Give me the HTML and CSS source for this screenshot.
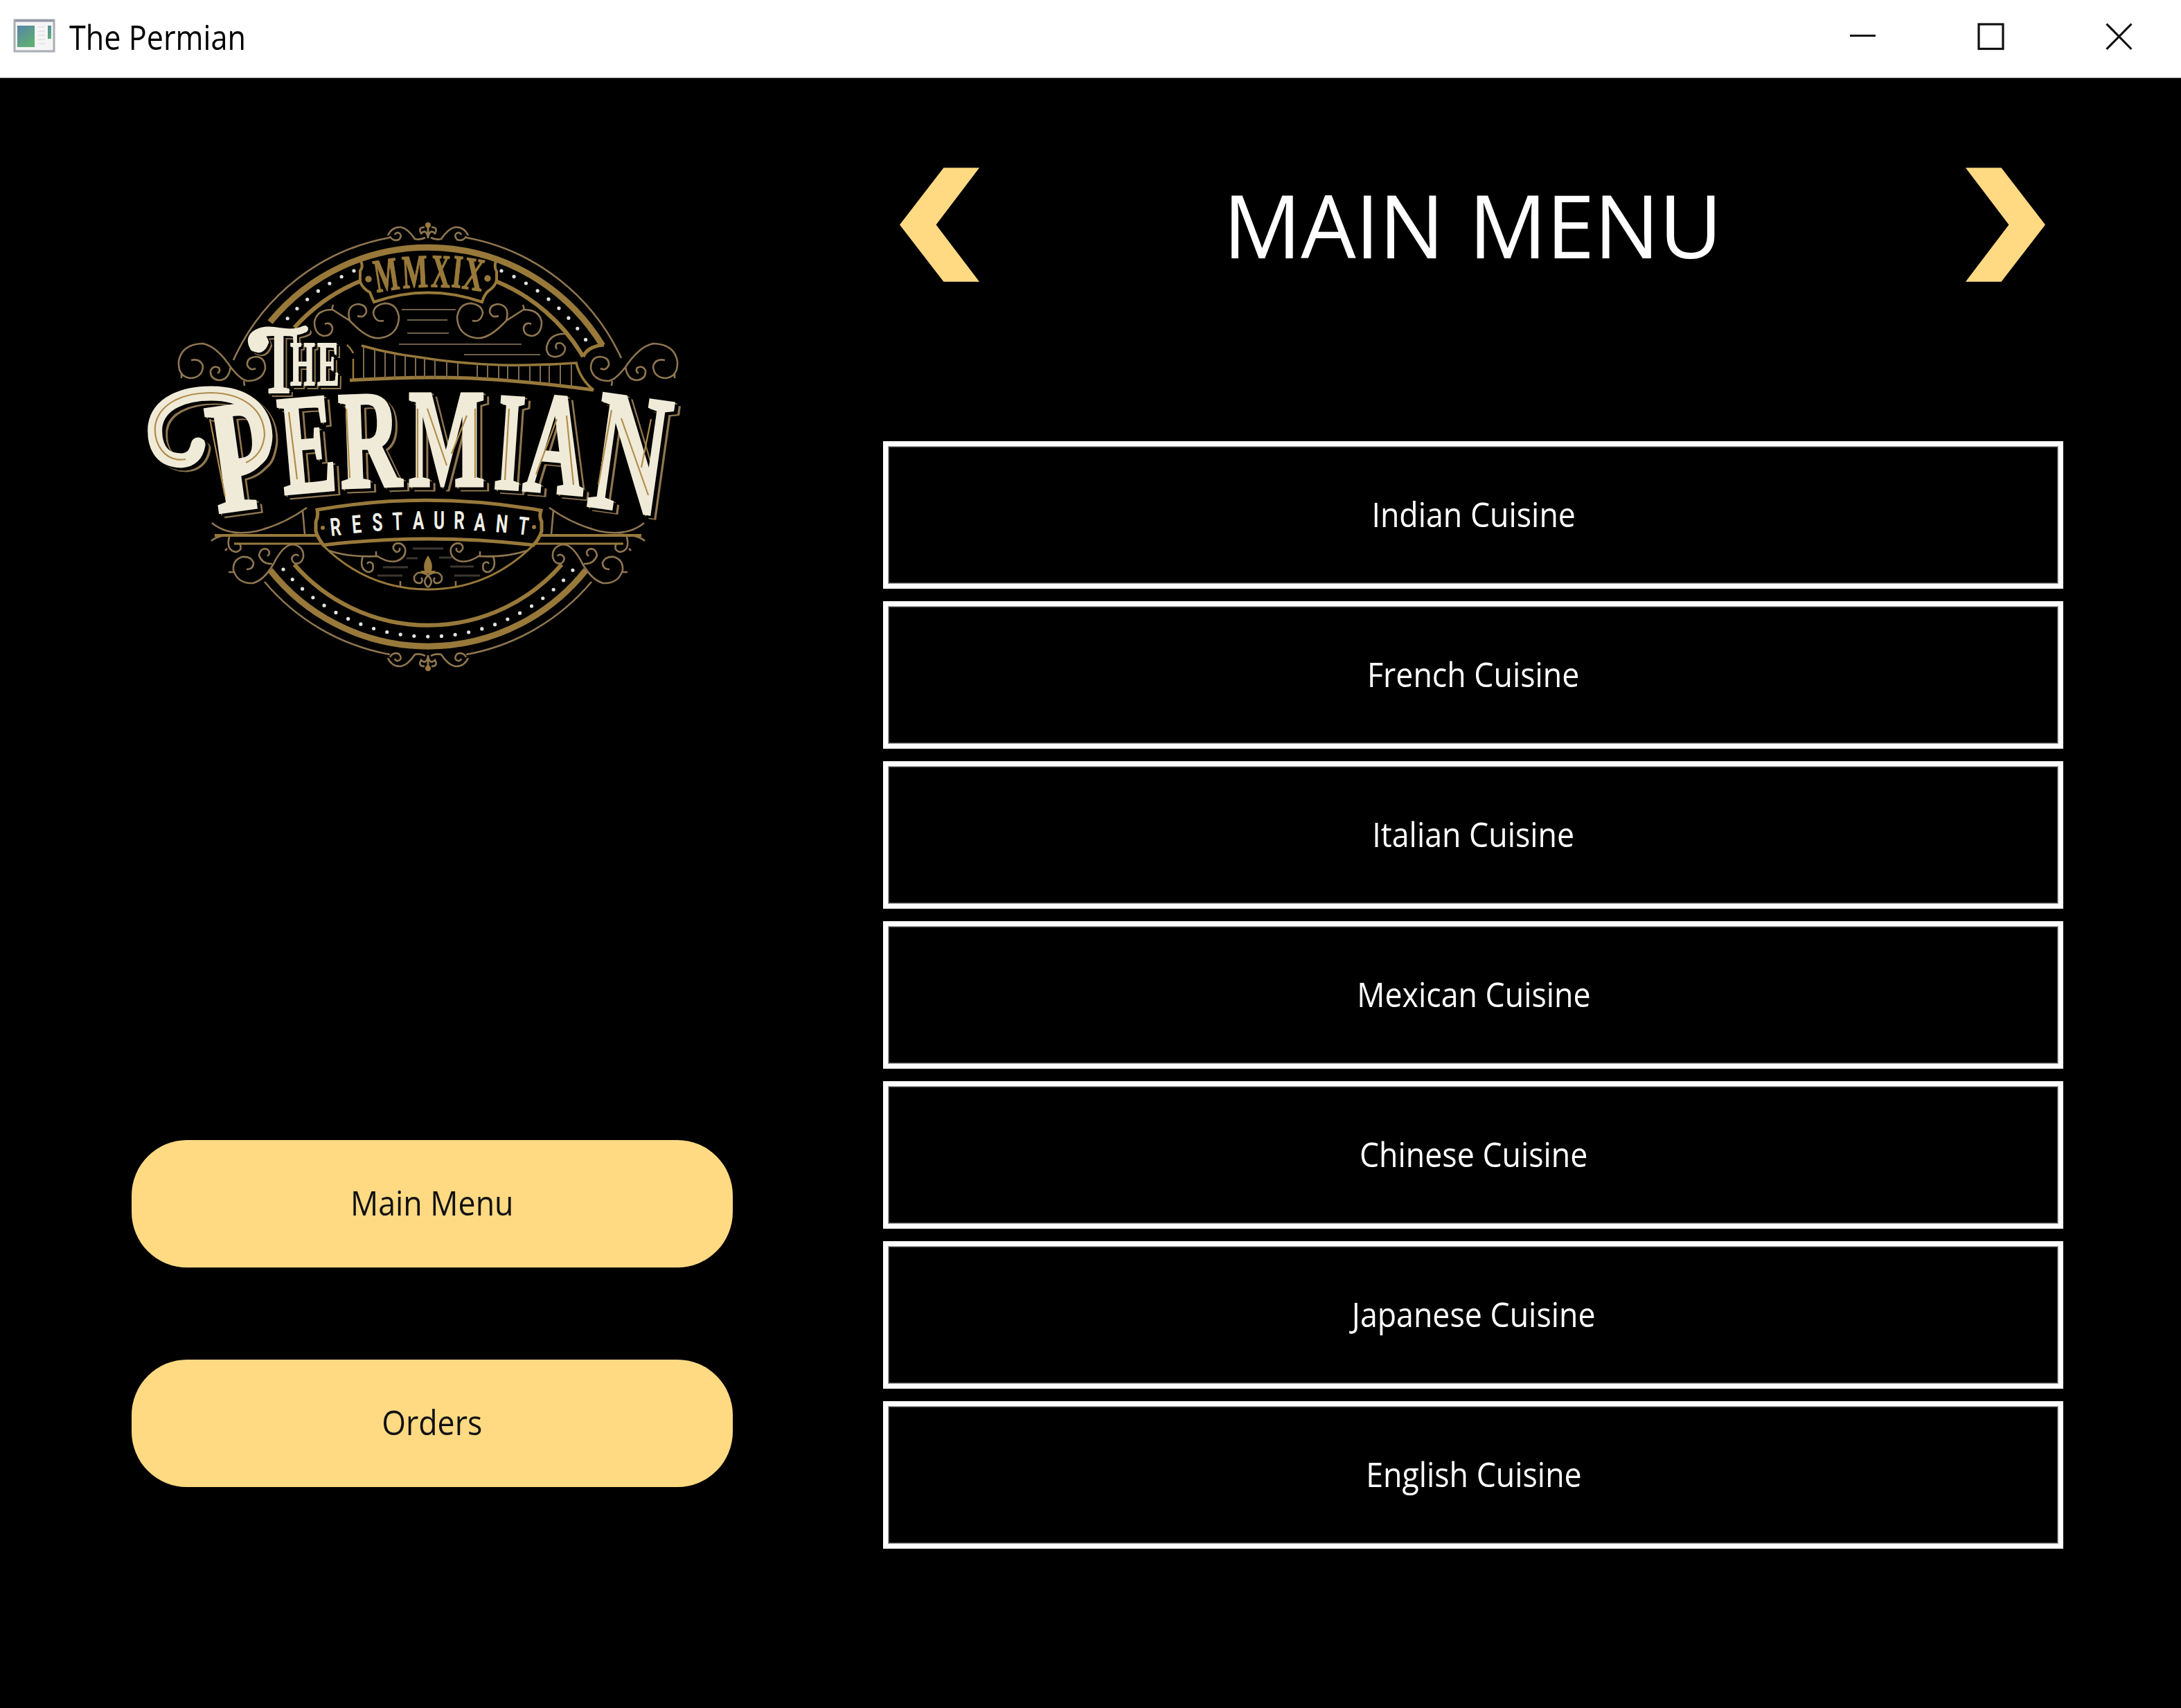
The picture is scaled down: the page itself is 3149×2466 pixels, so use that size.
FILE: index.html
```html
<!DOCTYPE html>
<html lang="en">
<head>
<meta charset="utf-8">
<title>The Permian</title>
<link rel="stylesheet" href="styles.css">
</head>
<body>
<div class="window">
  <header class="titlebar">
    <svg class="app-icon" viewBox="0 0 62 52">
      <defs>
        <linearGradient id="pane" x1="0" y1="0" x2=".6" y2="1"><stop offset="0" stop-color="#5685a8"/><stop offset="1" stop-color="#5fae74"/></linearGradient>
      </defs>
      <rect x="2" y="2" width="57" height="45" fill="#f5f5f6" stroke="#a9adb4" stroke-width="3"/>
      <path d="M3 3H58" stroke="#9096a3" stroke-width="3"/>
      <rect x="6" y="10" width="25" height="31" fill="url(#pane)"/>
      <path d="M36 12H46M36 18H46M36 24H46M36 30H46M36 36H46" stroke="#e6e6e8" stroke-width="2"/>
      <rect x="50" y="10" width="5" height="19" fill="url(#pane)"/>
    </svg>
    <span class="title">The Permian</span>
    <div class="controls">
      <svg class="control" viewBox="0 0 40 40"><path d="M1 18.500H38"/></svg>
      <svg class="control" viewBox="0 0 40 40"><rect x="2" y="2" width="35" height="35.500"/></svg>
      <svg class="control" viewBox="0 0 40 40"><path d="M1.500 1.500L37.500 38M37.500 1.500L1.500 38"/></svg>
    </div>
  </header>
  <main class="content">
    <aside class="sidebar">
      <svg class="logo" viewBox="200 310 800 670">
        <defs>
          <g id="scrolls">
            <path d="M469 468q8-4 11 5q0 12-13 12q-13-3-13-20q3-18 26-18L505 463q26 28 44 25q26-4 27-30q-3-20-20-20q-16 2-17 14q3 14 15 11M505 463q-6-22 12-24q12 1 12 11q-3 10-13 6M479 447l2-7"/>
            <path d="M276 520q14-3 17 9q-1 16-18 17q-18-2-17-24q4-25 35-26q20 4 40 34q14 18 24 20q22 0 26-18q0-16-13-17q-14 1-13 12q4 9 12 5M333 530q-3 19-17 19q-13-2-12-14q4-8 12-4q3 5-2 8M262 538v8M352 550l1 7"/>
            <path d="M356 822q10 0 10-10q-4-9-16-8q-14 4-13 19q6 20 28 19q16-4 30-28q14-28 28-28q16 3 15 18q-3 12-13 9q-7-6-1-11q5-3 7 1M393 814q-14 1-19-12q2-12 12-9q6 5 0 10M338 826h-8"/>
            <path d="M331 775q-5 20 10 22q10-3 5-12h-8M328 792l-3 3"/>
            <path d="M306 755Q330 775 370 767Q410 757 443 733M437 737L440 771M305 781Q316 771 345 772"/>
            <path d="M475 795q30 10 70 8q15 10 28 7q14-5 12-18q-4-10-14-7q-7 6 1 12q6 0 5-6M524 803q-6 18 7 23q10 0 7-12q-5-5-8 0M543 803v-7M578 847v-8"/>
            <path d="M618 848q10-8-1-18q-14-8-19 3q-1 9 9 9q5-4 1-8"/>
          </g>
          <g id="crest">
            <path d="M560 340q6-13 19-12q10 2 20 17q8 2 15-2M563 341q4 8 13 5q5-6 1-9q-5-3-7 2M618 326v18M618 342q-3-12-10-5q-5-9 5-9"/>
          </g>
        </defs>

        <!-- rings -->
        <g class="gold">
          <path stroke-width="9" d="M390 465A295 295 0 0 1 870 499"/>
          <path stroke-width="6" d="M425 473A260 260 0 0 1 520 406M716 406A260 260 0 0 1 842 515"/>
          <path stroke-width="5" d="M842 515q6-15 30-17"/>
          <path stroke-width="9" d="M390 823A291 291 0 0 0 846 823"/>
          <path stroke-width="6" d="M425 815A256 256 0 0 0 811 815"/>
        </g>
        <g class="fine">
          <path d="M337 520A308 308 0 0 1 563 343M673 343A308 308 0 0 1 897 517"/>
          <path d="M382 840A308 308 0 0 0 563 945M673 945A308 308 0 0 0 854 840"/>
        </g>
        <g class="beads">
          <path stroke-dasharray="0 19.800" d="M511 391A277 277 0 0 0 414 461"/>
          <path stroke-dasharray="0 19.900" d="M724 391A277 277 0 0 1 846 491"/>
          <path stroke-dasharray="0 19.780" d="M409 822A274.600 274.600 0 0 0 828 822"/>
        </g>

        <!-- scrollwork, mirrored about the vertical axis -->
        <g class="fine">
          <use href="#scrolls"/>
          <use href="#scrolls" transform="translate(1236 0) scale(-1 1)"/>
          <use href="#crest"/>
          <use href="#crest" transform="translate(1236 0) scale(-1 1)"/>
          <use href="#crest" transform="translate(0 1290) scale(1 -1)"/>
          <use href="#crest" transform="translate(1236 1290) scale(-1 -1)"/>
          <path d="M817 482q-26-1-28 22q2 12 14 11q13-2 13-13q-4-9-12-6q-3 4 0 8"/>
        </g>
        <g class="finials">
          <circle cx="618" cy="325" r="4"/><circle cx="618" cy="965" r="4"/>
          <path d="M618 802q10 15 3 26h-6q-7-11 3-26zM608 824h20v4h-20z"/>
        </g>
        <g class="rules">
          <path d="M580 447H658M588 462H646M588 481H648M576 497H753M670 512H780"/>
          <path class="dim" d="M553 819H589M545 831H581M587 806H603M596 792H640M634 805H652M650 818H684M656 831H693"/>
        </g>

        <!-- bridge -->
        <g class="gold">
          <path stroke-width="3.500" d="M522 499Q560 510 600 515Q660 525 723 527Q780 528 832 524Q838 548 857 563"/>
          <path stroke-width="5" d="M505 549Q600 543 680 546Q760 550 857 563"/>
          <path stroke-width="2.500" d="M510 549V518M510 510q-4-8-9-12"/>
        </g>
        <path class="cables" d="M525 500V548M541 505V547M556 508V547M570 511V547M585 513V546M600 515V546M613 517V546M628 519V546M645 521V546M661 523V546M689 525V547M704 526V547M720 527V548M733 527V549M749 527V550M765 527V552M780 527V553M793 527V554M809 526V556M825 525V558"/>

        <!-- year badge -->
        <path class="gold" stroke-width="4" d="M521 377q4 8-1 14v16q4 10 14 15q3 8 6 14Q618 409 696 436q3-10 8-15q12-8 13-17v-12q-4-6-1-15"/>
        <g class="year">
          <circle cx="532" cy="403" r="4"/><circle cx="704" cy="402" r="4"/>
          <text transform="translate(544 422) rotate(-9) scale(.54 1)">M</text>
          <text transform="translate(582 416) rotate(-3) scale(.57 1)">M</text>
          <text transform="translate(622 414) rotate(2) scale(.56 1)">X</text>
          <text transform="translate(651 414) rotate(6) scale(.54 1)">I</text>
          <text transform="translate(666 416) rotate(9) scale(.6 1)">X</text>
        </g>

        <!-- name banner -->
        <g class="gold">
          <path stroke-width="4" d="M310 773H458M778 773H926"/>
          <path stroke-width="3" d="M338 785H466M770 785H900"/>
          <path stroke-width="5" d="M458 736Q618 708 781 737q-3 10 1 16v14q-4 12-12 20Q618 769 467 787q-8-10-11-20v-14q4-8 2-17z"/>
          <path stroke-width="3" d="M466 787Q530 851 618 851Q706 851 770 787"/>
        </g>
        <g class="banner">
          <text transform="translate(478 774) rotate(-6) scale(.68 1)">R</text>
          <text transform="translate(509 770) rotate(-5) scale(.68 1)">E</text>
          <text transform="translate(538 767) rotate(-3) scale(.68 1)">S</text>
          <text transform="translate(567 765.500) rotate(-2) scale(.66 1)">T</text>
          <text transform="translate(596 764) scale(.68 1)">A</text>
          <text transform="translate(626 764) scale(.68 1)">U</text>
          <text transform="translate(655 763.500) rotate(1) scale(.68 1)">R</text>
          <text transform="translate(684 766) rotate(3) scale(.68 1)">A</text>
          <text transform="translate(715 768) rotate(5) scale(.68 1)">N</text>
          <text transform="translate(747 771) rotate(7) scale(.66 1)">T</text>
        </g>
        <g class="finials"><circle cx="466" cy="762" r="3"/><circle cx="771" cy="761" r="3"/></g>

        <!-- wordmark -->
        <g class="wordmark small">
          <text font-size="138" transform="translate(376 567) scale(.58 1)">T</text>
          <text font-size="92" transform="translate(419 556) scale(.5 1)">H</text>
          <text font-size="92" transform="translate(458 556) scale(.52 1)">E</text>
          <path class="swash" stroke-width="10" d="M381 496q-12 2-9-7q8-6 11 5q-5 15-17 8q-8-14 4-21q12-7 32-3q24 4 38-3"/>
        </g>
        <g class="wordmark">
          <text font-size="228" transform="translate(314 740) rotate(-8) scale(.68 1)">P</text>
          <text font-size="205" transform="translate(410 713) rotate(-5) scale(.58 1)">E</text>
          <text font-size="201" transform="translate(492 704) rotate(-2) scale(.61 1)">R</text>
          <text font-size="201" transform="translate(590 701) scale(.58 1)">M</text>
          <text font-size="201" transform="translate(712 704) rotate(4) scale(.5 1)">I</text>
          <text font-size="209" transform="translate(754 707) rotate(5) scale(.58 1)">A</text>
          <text font-size="248" transform="translate(846 729) rotate(8) scale(.6 1)">N</text>
          <path class="swash" stroke-width="21" d="M286 642Q282 664 262 665C230 665 222 640 224 615C229 582 265 568 305 568C352 568 382 590 383 630C382 655 365 676 338 678"/>
        </g>
        <path class="inlay" d="M268 663C237 668 222 640 224 615C229 582 265 567 305 567C350 568 381 590 382 628C380 650 368 662 355 668M303 605L325 717M417 595L429 692M500 590L505 690M603 590V690M617 590L645 672M652 655L674 600M686 590V690M735 590L729 693M804 605L774 685M818 600L828 700M883 592L864 700M897 604L936 715M940 605L926 675"/>
      </svg>
      <nav class="nav">
        <button class="nav-button"><span class="label">Main Menu</span></button>
        <button class="nav-button"><span class="label">Orders</span></button>
      </nav>
    </aside>
    <section class="menu">
      <div class="menu-head">
        <svg class="arrow" viewBox="0 0 116 166"><path d="M64 0H116L53 83L116 166H64L0 83Z"/></svg>
        <h1 class="heading">MAIN MENU</h1>
        <svg class="arrow" viewBox="0 0 116 166"><path d="M52 0H0L63 83L0 166H52L116 83Z"/></svg>
      </div>
      <ul class="cuisines">
        <li class="cuisine"><span class="label">Indian Cuisine</span></li>
        <li class="cuisine"><span class="label">French Cuisine</span></li>
        <li class="cuisine"><span class="label">Italian Cuisine</span></li>
        <li class="cuisine"><span class="label">Mexican Cuisine</span></li>
        <li class="cuisine"><span class="label">Chinese Cuisine</span></li>
        <li class="cuisine"><span class="label">Japanese Cuisine</span></li>
        <li class="cuisine"><span class="label">English Cuisine</span></li>
      </ul>
    </section>
  </main>
</div>
</body>
</html>
```
FILE: styles.css
```css
* { box-sizing: border-box; }

body {
  margin: 0;
  background: #000;
  font-family: "Open Sans", "Noto Sans", sans-serif;
  font-size: 48.5px;
  color: #fff;
}

.window {
  display: flex;
  flex-direction: column;
  width: 3149px;
  height: 2466px;
  overflow: hidden;
}

.titlebar {
  display: flex;
  align-items: center;
  flex: none;
  height: 113px;
  padding: 0 69px 6px 19px;
  background: #fff;
  border-bottom: 1px solid #777;
  color: #000;
}

.app-icon { width: 62px; height: 52px; }

.title {
  margin-left: 19px;
  transform: scaleX(.89);
  transform-origin: left;
}

.controls {
  display: flex;
  gap: 145px;
  margin-left: auto;
}

.control {
  width: 40px;
  height: 40px;
  fill: none;
  stroke: #111;
  stroke-width: 3.2;
}

.content {
  display: flex;
  flex: 1;
  background: #000;
}

.sidebar {
  width: 1275px;
  padding: 197px 0 0 190px;
}

.logo {
  display: block;
  width: 800px;
  height: 670px;
  margin-left: 10px;
}

.nav {
  display: flex;
  flex-direction: column;
  gap: 133px;
  width: 868px;
  margin-top: 666px;
}

.nav-button {
  height: 184px;
  padding: 0 0 4px;
  border: 0;
  border-radius: 80px;
  background: #ffda82;
  color: #111;
  font: inherit;
}

.label {
  display: inline-block;
  transform: scaleX(.922);
}

.menu {
  width: 1704px;
  padding-top: 129px;
}

.menu-head {
  display: flex;
  justify-content: space-between;
  align-items: center;
  height: 165px;
  padding: 0 26px 0 24px;
}

.arrow {
  width: 115px;
  height: 165px;
  fill: #ffda82;
}

.heading {
  margin: 0;
  font-size: 125.5px;
  font-weight: 400;
  line-height: 166px;
  letter-spacing: -.8px;
  word-spacing: 4px;
}

.cuisines {
  display: flex;
  flex-direction: column;
  gap: 18px;
  margin: 230px 0 0;
  padding: 0;
  list-style: none;
}

.cuisine {
  display: flex;
  align-items: center;
  justify-content: center;
  height: 213px;
  padding: 0 0 3px 1px;
  border: 7px solid #fff;
  box-shadow: inset 0 0 0 1px #aaa, inset 0 0 0 2px #444;
}

.gold { fill: none; stroke: #98793a; }
.fine { fill: none; stroke: #8f7650; stroke-width: 2.6; }
.beads { fill: none; stroke: #dfe3e6; stroke-width: 5.2; stroke-linecap: round; }
.finials { fill: #98793a; }
.rules { fill: none; stroke: #6f6046; stroke-width: 2.2; }
.dim { stroke: #3c362f; stroke-width: 3; }
.cables { fill: none; stroke: #7d6d50; stroke-width: 2; }

.year {
  fill: #98793a;
  stroke: #98793a;
  stroke-width: 1.5;
  font: bold 68px "Liberation Serif", serif;
}

.banner {
  fill: #eeeee6;
  font: bold 36px Roboto, sans-serif;
}

.wordmark {
  fill: #f0ebd8;
  stroke: #f0ebd8;
  stroke-width: 5;
  font-family: "Liberation Serif", serif;
  font-weight: bold;
  filter: drop-shadow(5px 4px 0 #000) drop-shadow(3px 2px 0 #8f7650);
}

.small {
  stroke-width: 2;
  filter: drop-shadow(3px 3px 0 #000) drop-shadow(2px 2px 0 #8f7650);
}

.swash {
  fill: none;
  stroke-linecap: round;
}

.inlay { fill: none; stroke: #b08d4c; stroke-width: 2.2; }
```
